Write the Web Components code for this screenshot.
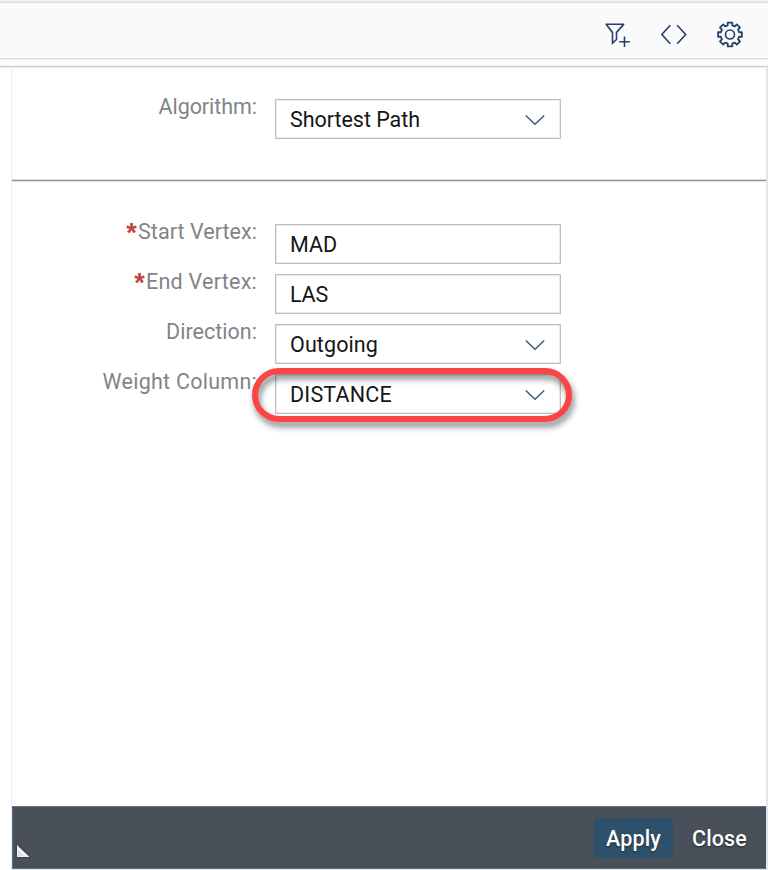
<!DOCTYPE html>
<html lang="en">
<head>
<meta charset="utf-8">
<title>Graph algorithm</title>
<style>
html,body{margin:0;height:100%;overflow:hidden;background:#fff}
</style>
</head>
<body>
<graph-page></graph-page>
<script>
// Text whose letter spacing is adjusted so that it fills a given width.
class FitText extends HTMLElement{
  connectedCallback(){
    const root=this.attachShadow({mode:'open'});
    root.innerHTML=`<style>:host{display:inline-block;white-space:nowrap}span{display:inline-block}</style><span></span>`;
    const s=root.querySelector('span');
    s.textContent=this.getAttribute('text');
    const w=+this.getAttribute('w');
    s.style.letterSpacing='0';
    const n=s.textContent.length;
    const gap=(w-s.getBoundingClientRect().width)/n;
    s.style.letterSpacing=gap.toFixed(3)+'px';
  }
}
class ToolBar extends HTMLElement{
  connectedCallback(){
    this.attachShadow({mode:'open'}).innerHTML=`<style>
    :host{display:flex;box-sizing:border-box;height:68px;flex-direction:column;background:#fafafa;border-top:1px solid #edf2f6}
    .edge{height:2px;background:linear-gradient(#e7ebef 50%,#dcdfe2 50%)}
    .icons{flex:1;display:flex;justify-content:flex-end;align-items:center;gap:28px;padding:8px 24px 0 0}
    .line{height:1px;background:#d3e1ef;border-bottom:1px solid #eef3f8}
    .low{height:6px}
    .end{height:1px;background:#c8c9cb;border-bottom:1px solid #e9eff5}
    svg{display:block;fill:none;stroke:#21406b;stroke-width:1.6}
    </style><div class="edge"></div><div class="icons">
    <svg width="28" height="28" viewBox="0 0 28 28"><path d="M1.5 3.3H20.3M2.3 3.6L8.5 11.4V22.2L12.5 18.5V11.4L19.5 3.6M20.5 15.4V26M15.2 20.8H25.8"/></svg>
    <svg width="28" height="28" viewBox="0 0 28 28"><path d="M10.3 4.2L1.8 13.5L10.3 22.8M17.2 4.2L25.7 13.5L17.2 22.8"/></svg>
    <svg width="28" height="28" viewBox="0 0 28 28"><path id="gear" stroke-width="1.8"/><circle cx="14" cy="13.5" r="4.5"/></svg>
    </div><div class="line"></div><div class="low"></div><div class="end"></div>`;
    // Eight rounded teeth around the hub.
    const pts=[];
    for(let i=0;i<8;i++){
      for(const [off,r] of [[-14,9.4],[-11,12.1],[11,12.1],[14,9.4]]){
        const a=(i*45+off-90)*Math.PI/180;
        pts.push((14+r*Math.cos(a)).toFixed(2)+' '+(13.5+r*Math.sin(a)).toFixed(2));
      }
    }
    const g=this.shadowRoot.getElementById('gear');
    g.setAttribute('d','M'+pts.join('L')+'Z');
    g.setAttribute('stroke-linejoin','round');
  }
}
class FormRow extends HTMLElement{
  connectedCallback(){
    const a=n=>this.getAttribute(n), on=n=>this.hasAttribute(n);
    this.attachShadow({mode:'open'}).innerHTML=`<style>
    :host{display:grid;grid-template-columns:245px 286px;column-gap:18px;height:41px}
    .label{display:flex;justify-content:flex-end;color:#828488;font-size:21.5px;line-height:25px;margin-top:-4px}
    b{font:bold 27px/30px "Liberation Sans",Arial,sans-serif;color:#c1443f;width:13px;margin-top:-1px;text-align:center}
    .box{position:relative;box-sizing:border-box;display:flex;justify-content:space-between;align-items:center;border:1px solid #bfbfbf;box-shadow:inset 0 0 0 1px #e9e9e9;height:40px;margin-top:1px;padding:1px 15px 0 14px;color:#151515;font-size:21.5px;line-height:25px}
    svg{display:block;fill:none;stroke:#3e5876;stroke-width:1.4}
    .ring{position:absolute;left:-24px;top:-7px;width:320px;height:54px;box-sizing:border-box;border:6px solid #fd4444;border-radius:27px;filter:drop-shadow(2px 5px 3px rgba(0,0,0,.48))}
    </style><div class="label">${on('required')?'<b>*</b>':''}<fit-text text="${a('label')}" w="${a('lw')}"></fit-text></div>
    <div class="box"><fit-text text="${a('value')}" w="${a('vw')}"></fit-text>${on('select')?'<svg width="20" height="12" viewBox="0 0 20 12"><path d="M.8 1.5L10 10.2L19.2 1.5"/></svg>':''}${on('marked')?'<div class="ring"></div>':''}</div>`;
  }
}
class FooterBar extends HTMLElement{
  connectedCallback(){
    this.attachShadow({mode:'open'}).innerHTML=`<style>
    :host{display:flex;box-sizing:border-box;height:63px;background:#495059;border:1px solid #69717b;border-right:0;color:#fff;align-items:center;padding:0 19px 0 4px;font-size:21.5px;line-height:26px;font-weight:500;text-shadow:0 1px 2px #20262d}
    svg{align-self:flex-end;margin-bottom:11px;filter:drop-shadow(0 0 1px #1f252b)}
    .apply{margin-left:auto;width:79px;height:40px;box-sizing:border-box;padding-top:2px;border-radius:4px;background:#2f506b;display:flex;align-items:center;justify-content:center}
    .close{margin-left:19px;padding-top:2px}
    </style><svg width="13" height="12" viewBox="0 0 13 12"><path d="M0 0L12.5 12H0Z" fill="#f1f1f1"/><path d="M1 6L6 11M1 9L3 11" stroke="#b4bac2" stroke-width=".8"/></svg>
    <div class="apply"><fit-text text="Apply" w="55"></fit-text></div><div class="close"><fit-text text="Close" w="55"></fit-text></div>`;
  }
}
class GraphPage extends HTMLElement{
  connectedCallback(){
    this.attachShadow({mode:'open'}).innerHTML=`<style>
    :host{display:flex;flex-direction:column;height:870px;width:768px;font-family:Roboto,sans-serif}
    main{box-sizing:border-box;flex:1;display:flex;flex-direction:column;margin-left:11px;border-left:1px solid #e5edf4;border-right:2px solid #dee5ee;border-bottom:1px solid #dce5ee}
    .top{height:111px;box-sizing:border-box;padding-top:30px}
    .rule{height:1px;background:#949494;border-top:1px solid #dedede;border-bottom:1px solid #e5e5e5}
    .fields{flex:1;display:flex;flex-direction:column;gap:9px;padding-top:41px}
    </style><tool-bar></tool-bar><main><div class="top"><form-row label="Algorithm:" lw="98.5" value="Shortest Path" vw="130" select></form-row></div><div class="rule"></div>
    <div class="fields">
    <form-row required label="Start Vertex:" lw="119" value="MAD" vw="47"></form-row>
    <form-row required label="End Vertex:" lw="111" value="LAS" vw="38"></form-row>
    <form-row label="Direction:" lw="91" value="Outgoing" vw="88" select></form-row>
    <form-row label="Weight Column:" lw="154.5" value="DISTANCE" vw="102" select marked></form-row>
    </div><footer-bar></footer-bar></main>`;
  }
}
customElements.define('fit-text',FitText);
customElements.define('tool-bar',ToolBar);
customElements.define('form-row',FormRow);
customElements.define('footer-bar',FooterBar);
customElements.define('graph-page',GraphPage);
</script>
</body>
</html>
